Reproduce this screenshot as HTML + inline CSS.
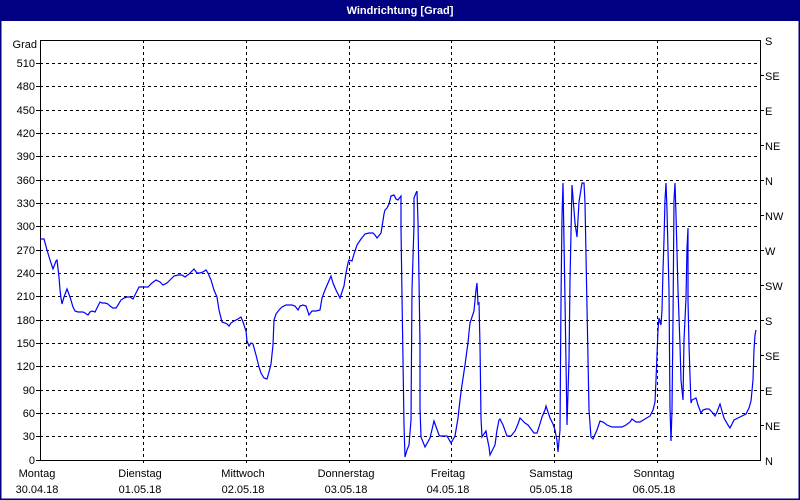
<!DOCTYPE html>
<html><head><meta charset="utf-8"><style>
html,body{margin:0;padding:0;background:#fff;}
body{width:800px;height:500px;overflow:hidden;position:relative;font-family:"Liberation Sans",sans-serif;}
</style></head><body>
<svg width="800" height="500" xmlns="http://www.w3.org/2000/svg" style="position:absolute;left:0;top:0" font-family="Liberation Sans, sans-serif" font-size="11">
<rect x="0" y="0" width="800" height="500" fill="#fff"/>
<rect x="0" y="0" width="800" height="21" fill="#000080"/>
<rect x="0" y="0" width="1.5" height="500" fill="#000080"/>
<rect x="798.5" y="0" width="1.5" height="500" fill="#000080"/>
<rect x="0" y="498.5" width="800" height="1.5" fill="#000080"/>
<text x="400" y="14" fill="#fff" font-weight="bold" text-anchor="middle" font-size="11">Windrichtung [Grad]</text>
<g stroke="#000" stroke-width="1" stroke-dasharray="3,3" fill="none">
<path d="M40 63.5H760M40 86.5H760M40 110.5H760M40 133.5H760M40 156.5H760M40 180.5H760M40 203.5H760M40 226.5H760M40 250.5H760M40 273.5H760M40 296.5H760M40 320.5H760M40 343.5H760M40 366.5H760M40 390.5H760M40 413.5H760M40 436.5H760"/>
<path d="M143.5 40V466M246.5 40V466M349.5 40V466M451.5 40V466M554.5 40V466M657.5 40V466"/>
</g>
<g stroke="#000" stroke-width="1" fill="none">
<path d="M40.5 40V461M40 40.5H760M760.5 40V461M40 460.5H760"/>
<path d="M36 63.5H40M36 86.5H40M36 110.5H40M36 133.5H40M36 156.5H40M36 180.5H40M36 203.5H40M36 226.5H40M36 250.5H40M36 273.5H40M36 296.5H40M36 320.5H40M36 343.5H40M36 366.5H40M36 390.5H40M36 413.5H40M36 436.5H40M36 460.5H40"/>
<path d="M760 75.5H764M760 110.5H764M760 145.5H764M760 180.5H764M760 215.5H764M760 250.5H764M760 285.5H764M760 320.5H764M760 355.5H764M760 390.5H764M760 425.5H764"/>
</g>
<g text-anchor="end" fill="#000">
<text x="37" y="48">Grad</text>
<text x="35" y="67">510</text><text x="35" y="90">480</text><text x="35" y="114">450</text><text x="35" y="137">420</text><text x="35" y="160">390</text><text x="35" y="184">360</text><text x="35" y="207">330</text><text x="35" y="230">300</text><text x="35" y="254">270</text><text x="35" y="277">240</text><text x="35" y="300">210</text><text x="35" y="324">180</text><text x="35" y="347">150</text><text x="35" y="370">120</text><text x="35" y="394">90</text><text x="35" y="417">60</text><text x="35" y="440">30</text><text x="35" y="464">0</text>
</g>
<g fill="#000">
<text x="765" y="45">S</text><text x="765" y="80">SE</text><text x="765" y="115">E</text><text x="765" y="150">NE</text><text x="765" y="185">N</text><text x="765" y="220">NW</text><text x="765" y="255">W</text><text x="765" y="290">SW</text><text x="765" y="325">S</text><text x="765" y="360">SE</text><text x="765" y="395">E</text><text x="765" y="430">NE</text><text x="765" y="465">N</text>
</g>
<g text-anchor="middle" fill="#000">
<text x="37" y="477">Montag</text><text x="37" y="493">30.04.18</text>
<text x="140" y="477">Dienstag</text><text x="140" y="493">01.05.18</text>
<text x="243" y="477">Mittwoch</text><text x="243" y="493">02.05.18</text>
<text x="346" y="477">Donnerstag</text><text x="346" y="493">03.05.18</text>
<text x="448" y="477">Freitag</text><text x="448" y="493">04.05.18</text>
<text x="551" y="477">Samstag</text><text x="551" y="493">05.05.18</text>
<text x="654" y="477">Sonntag</text><text x="654" y="493">06.05.18</text>
</g>
<polyline fill="none" stroke="#0000ff" stroke-width="1.2" points="40,239 44,239 47,250 50,260 53,269 56,261 57,260 59,277 60,290 61,298 62,304 64,297 67,289 70,297 73,307 75,311 78,312 81,312 83,312 85,313 88,315 90,312 92,311 95,312 97,308 100,302 102,303 105,303 108,304 110,306 113,308 116,308 118,305 121,300 124,298 127,297 130,297 133,299 137,291 139,287 143,287 148,287 152,283 156,280 160,282 163,285 167,283 171,279 174,276 178,275 182,275 185,277 189,274 192,271 194,269 197,273 200,273 203,272 206,270 208,273 211,280 214,290 217,297 219,310 222,322 225,323 227,324 229,326 231,323 234,321 238,319 241,317 243,322 246,331 247,341 249,346 251,343 253,344 256,355 259,367 261,373 264,378 267,379 269,372 271,364 273,345 274,320 276,314 279,310 282,307 286,305 292,305 295,306 298,310 300,306 303,305 306,306 309,315 312,311 316,311 320,310 322,298 325,290 328,283 331,276 333,283 336,290 340,298 344,286 346,273 348,263 349,260 352,261 354,254 357,245 361,239 365,234 369,233 373,233 375,235 377,238 381,233 382,227 384,214 385,210 387,208 389,204 391,196 394,195 396,199 398,200 401,196 401,228 402,297 403,360 404,425 405,457 407,450 409,445 411,420 412,290 414,225 414,198 416,193 417,191 418,222 419,280 420,345 420,408 421,437 425,447 430,438 434,421 439,435 440,436 447,436 451,443 455,436 458,418 460,400 462,385 465,365 467,350 468,343 469,332 470,323 474,311 476,290 477,283 478,304 479,303 480,345 481,418 482,437 486,431 487,437 489,447 490,455 495,445 497,430 499,420 500,419 503,425 507,436 511,436 515,431 518,424 520,418 522,420 525,423 528,425 531,429 534,433 537,433 539,427 542,417 545,410 546,406 550,418 553,424 555,430 557,441 558,452 560,430 561,300 562,217 563,183 565,300 567,425 569,360 570,280 572,185 575,223 577,237 579,202 582,183 584,183 585,203 587,307 589,410 591,437 593,439 597,430 600,421 603,422 607,425 612,427 617,427 622,427 626,425 630,422 632,419 636,422 640,422 645,419 650,416 653,410 655,402 656,380 657,355 658,330 659,318 660,322 661,325 662,310 663,270 664,240 665,200 666,183 667,210 669,290 670,408 671,441 672,410 673,320 674,200 675,183 676,215 678,290 680,345 681,380 682,390 683,400 684,340 686,298 687,248 688,228 688,300 689,345 690,376 691,403 692,400 696,398 698,405 701,413 703,410 706,409 709,409 712,412 715,416 717,412 720,404 722,411 724,418 728,425 730,428 734,420 738,418 742,416 746,414 749,408 751,401 753,380 754,350 755,335 756,330"/>
</svg>
</body></html>
